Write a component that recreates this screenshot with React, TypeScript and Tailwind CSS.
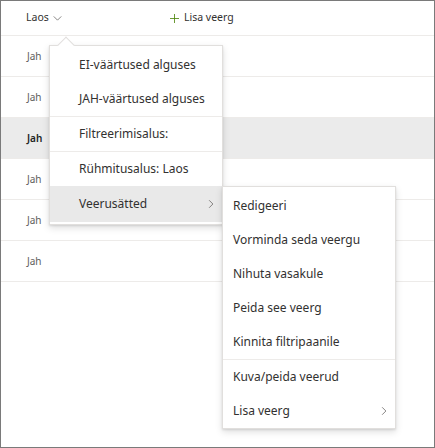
import React from 'react';

const font = { fontFamily: '"Segoe UI", "Noto Sans", "Open Sans", sans-serif' };

const Chevron = ({ className }: { className?: string }) => (
  <svg viewBox="0 0 8 12" className={className} fill="none" stroke="currentColor" strokeWidth="1">
    <path d="M1.5 1 L6.5 6 L1.5 11" />
  </svg>
);

const rows = [false, false, true, false, false, false];

const MenuItem = ({ label }: { label: string }) => (
  <div className="flex h-[34px] items-center pl-[29px] pr-[8px] text-[12px] text-[#323130]">
    <span>{label}</span>
  </div>
);

const SubItem = ({ label, sub }: { label: string; sub?: boolean }) => (
  <div className="flex h-[34px] items-center justify-between pl-[10px] pr-[8px] text-[12px] text-[#323130]">
    <span>{label}</span>
    {sub && <Chevron className="h-[10px] w-[6px] text-[#605e5c]" />}
  </div>
);

export default function App() {
  return (
    <div style={font} className="relative h-[448px] w-[435px] overflow-hidden border border-[#7a7a7a] bg-white">
      {/* header */}
      <div className="flex h-[35px] items-center border-b border-[#edebe9] text-[10.5px] text-[#323130]">
        <div className="flex w-[143px] items-center gap-[4px] pl-[25px]">
          <span>Laos</span>
          <svg viewBox="0 0 10 6" className="h-[5px] w-[9px] text-[#605e5c]" fill="none" stroke="currentColor" strokeWidth="0.9">
            <path d="M0.5 0.5 L5 5 L9.5 0.5" />
          </svg>
        </div>
        <div className="flex items-center gap-[5px] pl-[26px]">
          <svg viewBox="0 0 10 10" className="h-[9px] w-[9px] text-[#498205]" fill="none" stroke="currentColor" strokeWidth="0.9">
            <path d="M5 0 V10 M0 5 H10" />
          </svg>
          <span>Lisa veerg</span>
        </div>
      </div>

      {/* rows */}
      {rows.map((sel, i) => (
        <div
          key={i}
          className={`flex h-[41px] items-center border-b border-[#edebe9] pl-[26px] text-[10px] ${
            sel ? 'bg-[#ebebeb] font-semibold text-[#201f1e]' : 'text-[#605e5c]'
          }`}
        >
          Jah
        </div>
      ))}

      {/* context menu */}
      <div className="absolute left-[48px] top-[44px] w-[174px] border border-[#e1dfdd] bg-white py-[2px] shadow-[0_3px_7px_rgba(0,0,0,0.13),0_0.6px_1.8px_rgba(0,0,0,0.1)]">
        <div className="absolute left-[10px] top-[-7px] h-[12px] w-[12px] rotate-45 border-l border-t border-[#e1dfdd] bg-white" />
        <MenuItem label="EI-väärtused alguses" />
        <MenuItem label="JAH-väärtused alguses" />
        <div className="h-px bg-[#edebe9]" />
        <MenuItem label="Filtreerimisalus:" />
        <div className="h-px bg-[#edebe9]" />
        <MenuItem label="Rühmitusalus: Laos" />
        <div className="flex h-[36px] items-center justify-between bg-[#e9e9e9] pl-[29px] pr-[8px] text-[12px] text-[#323130]">
          <span>Veerusätted</span>
          <Chevron className="h-[10px] w-[6px] text-[#605e5c]" />
        </div>
      </div>

      {/* submenu */}
      <div className="absolute left-[221px] top-[185px] w-[174px] border border-[#e1dfdd] bg-white pt-[2px] shadow-[0_3px_7px_rgba(0,0,0,0.13),0_0.6px_1.8px_rgba(0,0,0,0.1)]">
        <SubItem label="Redigeeri" />
        <SubItem label="Vorminda seda veergu" />
        <SubItem label="Nihuta vasakule" />
        <SubItem label="Peida see veerg" />
        <SubItem label="Kinnita filtripaanile" />
        <div className="h-px bg-[#edebe9]" />
        <SubItem label="Kuva/peida veerud" />
        <SubItem label="Lisa veerg" sub />
      </div>
    </div>
  );
}
